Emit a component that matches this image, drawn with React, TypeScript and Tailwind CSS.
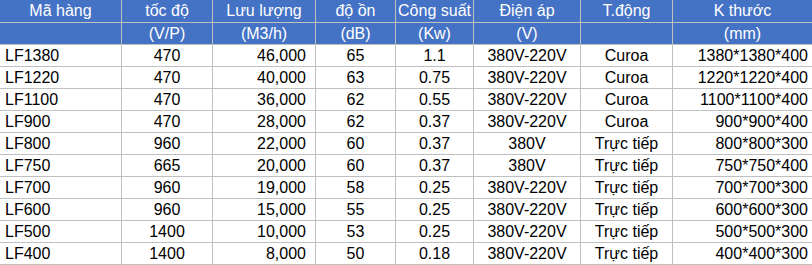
const cols = "grid-cols-[121px_90px_102px_79px_77px_106px_91px_139px]";

type Row = {
    code: string;
    speed: string;
    flow: string;
    noise: string;
    power: string;
    voltage: string;
    drive: string;
    size: string;
};

const rows: Row[] = [
    { code: "LF1380", speed: "470", flow: "46,000", noise: "65", power: "1.1", voltage: "380V-220V", drive: "Curoa", size: "1380*1380*400" },
    { code: "LF1220", speed: "470", flow: "40,000", noise: "63", power: "0.75", voltage: "380V-220V", drive: "Curoa", size: "1220*1220*400" },
    { code: "LF1100", speed: "470", flow: "36,000", noise: "62", power: "0.55", voltage: "380V-220V", drive: "Curoa", size: "1100*1100*400" },
    { code: "LF900", speed: "470", flow: "28,000", noise: "62", power: "0.37", voltage: "380V-220V", drive: "Curoa", size: "900*900*400" },
    { code: "LF800", speed: "960", flow: "22,000", noise: "60", power: "0.37", voltage: "380V", drive: "Trực tiếp", size: "800*800*300" },
    { code: "LF750", speed: "665", flow: "20,000", noise: "60", power: "0.37", voltage: "380V", drive: "Trực tiếp", size: "750*750*400" },
    { code: "LF700", speed: "960", flow: "19,000", noise: "58", power: "0.25", voltage: "380V-220V", drive: "Trực tiếp", size: "700*700*300" },
    { code: "LF600", speed: "960", flow: "15,000", noise: "55", power: "0.25", voltage: "380V-220V", drive: "Trực tiếp", size: "600*600*300" },
    { code: "LF500", speed: "1400", flow: "10,000", noise: "53", power: "0.25", voltage: "380V-220V", drive: "Trực tiếp", size: "500*500*300" },
    { code: "LF400", speed: "1400", flow: "8,000", noise: "50", power: "0.18", voltage: "380V-220V", drive: "Trực tiếp", size: "400*400*300" },
];

const headTop = ["Mã hàng", "tốc độ", "Lưu lượng", "độ ồn", "Công suất", "Điện áp", "T.động", "K thước"];
const headUnit = ["", "(V/P)", "(M3/h)", "(dB)", "(Kw)", "(V)", "", "(mm)"];

export default function App() {
    return (
        <div className="w-[812px] h-[265px] bg-white font-['Liberation_Sans',Arial,sans-serif] text-[16px] leading-[21px]">
            <div className={`grid ${cols} gap-px bg-[#c0c0c0] pb-px`}>
                {/* Header */}
                {headTop.map((h) => (
                    <div key={h} className="h-[22px] bg-[#4472c4] text-white text-center leading-[22px] whitespace-nowrap">
                        {h}
                    </div>
                ))}
                {headUnit.map((h, i) => (
                    <div key={`u${i}`} className="h-[21px] bg-[#4472c4] text-white text-center whitespace-nowrap">
                        {h}
                    </div>
                ))}

                {/* Data rows */}
                {rows.map((r) => (
                    <Cells key={r.code} row={r} />
                ))}
            </div>
        </div>
    );
}

function Cells({ row }: { row: Row }) {
    const cell = "h-[21px] bg-white text-black whitespace-nowrap";
    return (
        <>
            <div className={`${cell} pl-[5px]`}>{row.code}</div>
            <div className={`${cell} text-center`}>{row.speed}</div>
            <div className={`${cell} text-right pr-[9px]`}>{row.flow}</div>
            <div className={`${cell} text-center`}>{row.noise}</div>
            <div className={`${cell} text-center`}>{row.power}</div>
            <div className={`${cell} text-center`}>{row.voltage}</div>
            <div className={`${cell} text-center`}>{row.drive}</div>
            <div className={`${cell} text-right pr-[4px]`}>{row.size}</div>
        </>
    );
}
